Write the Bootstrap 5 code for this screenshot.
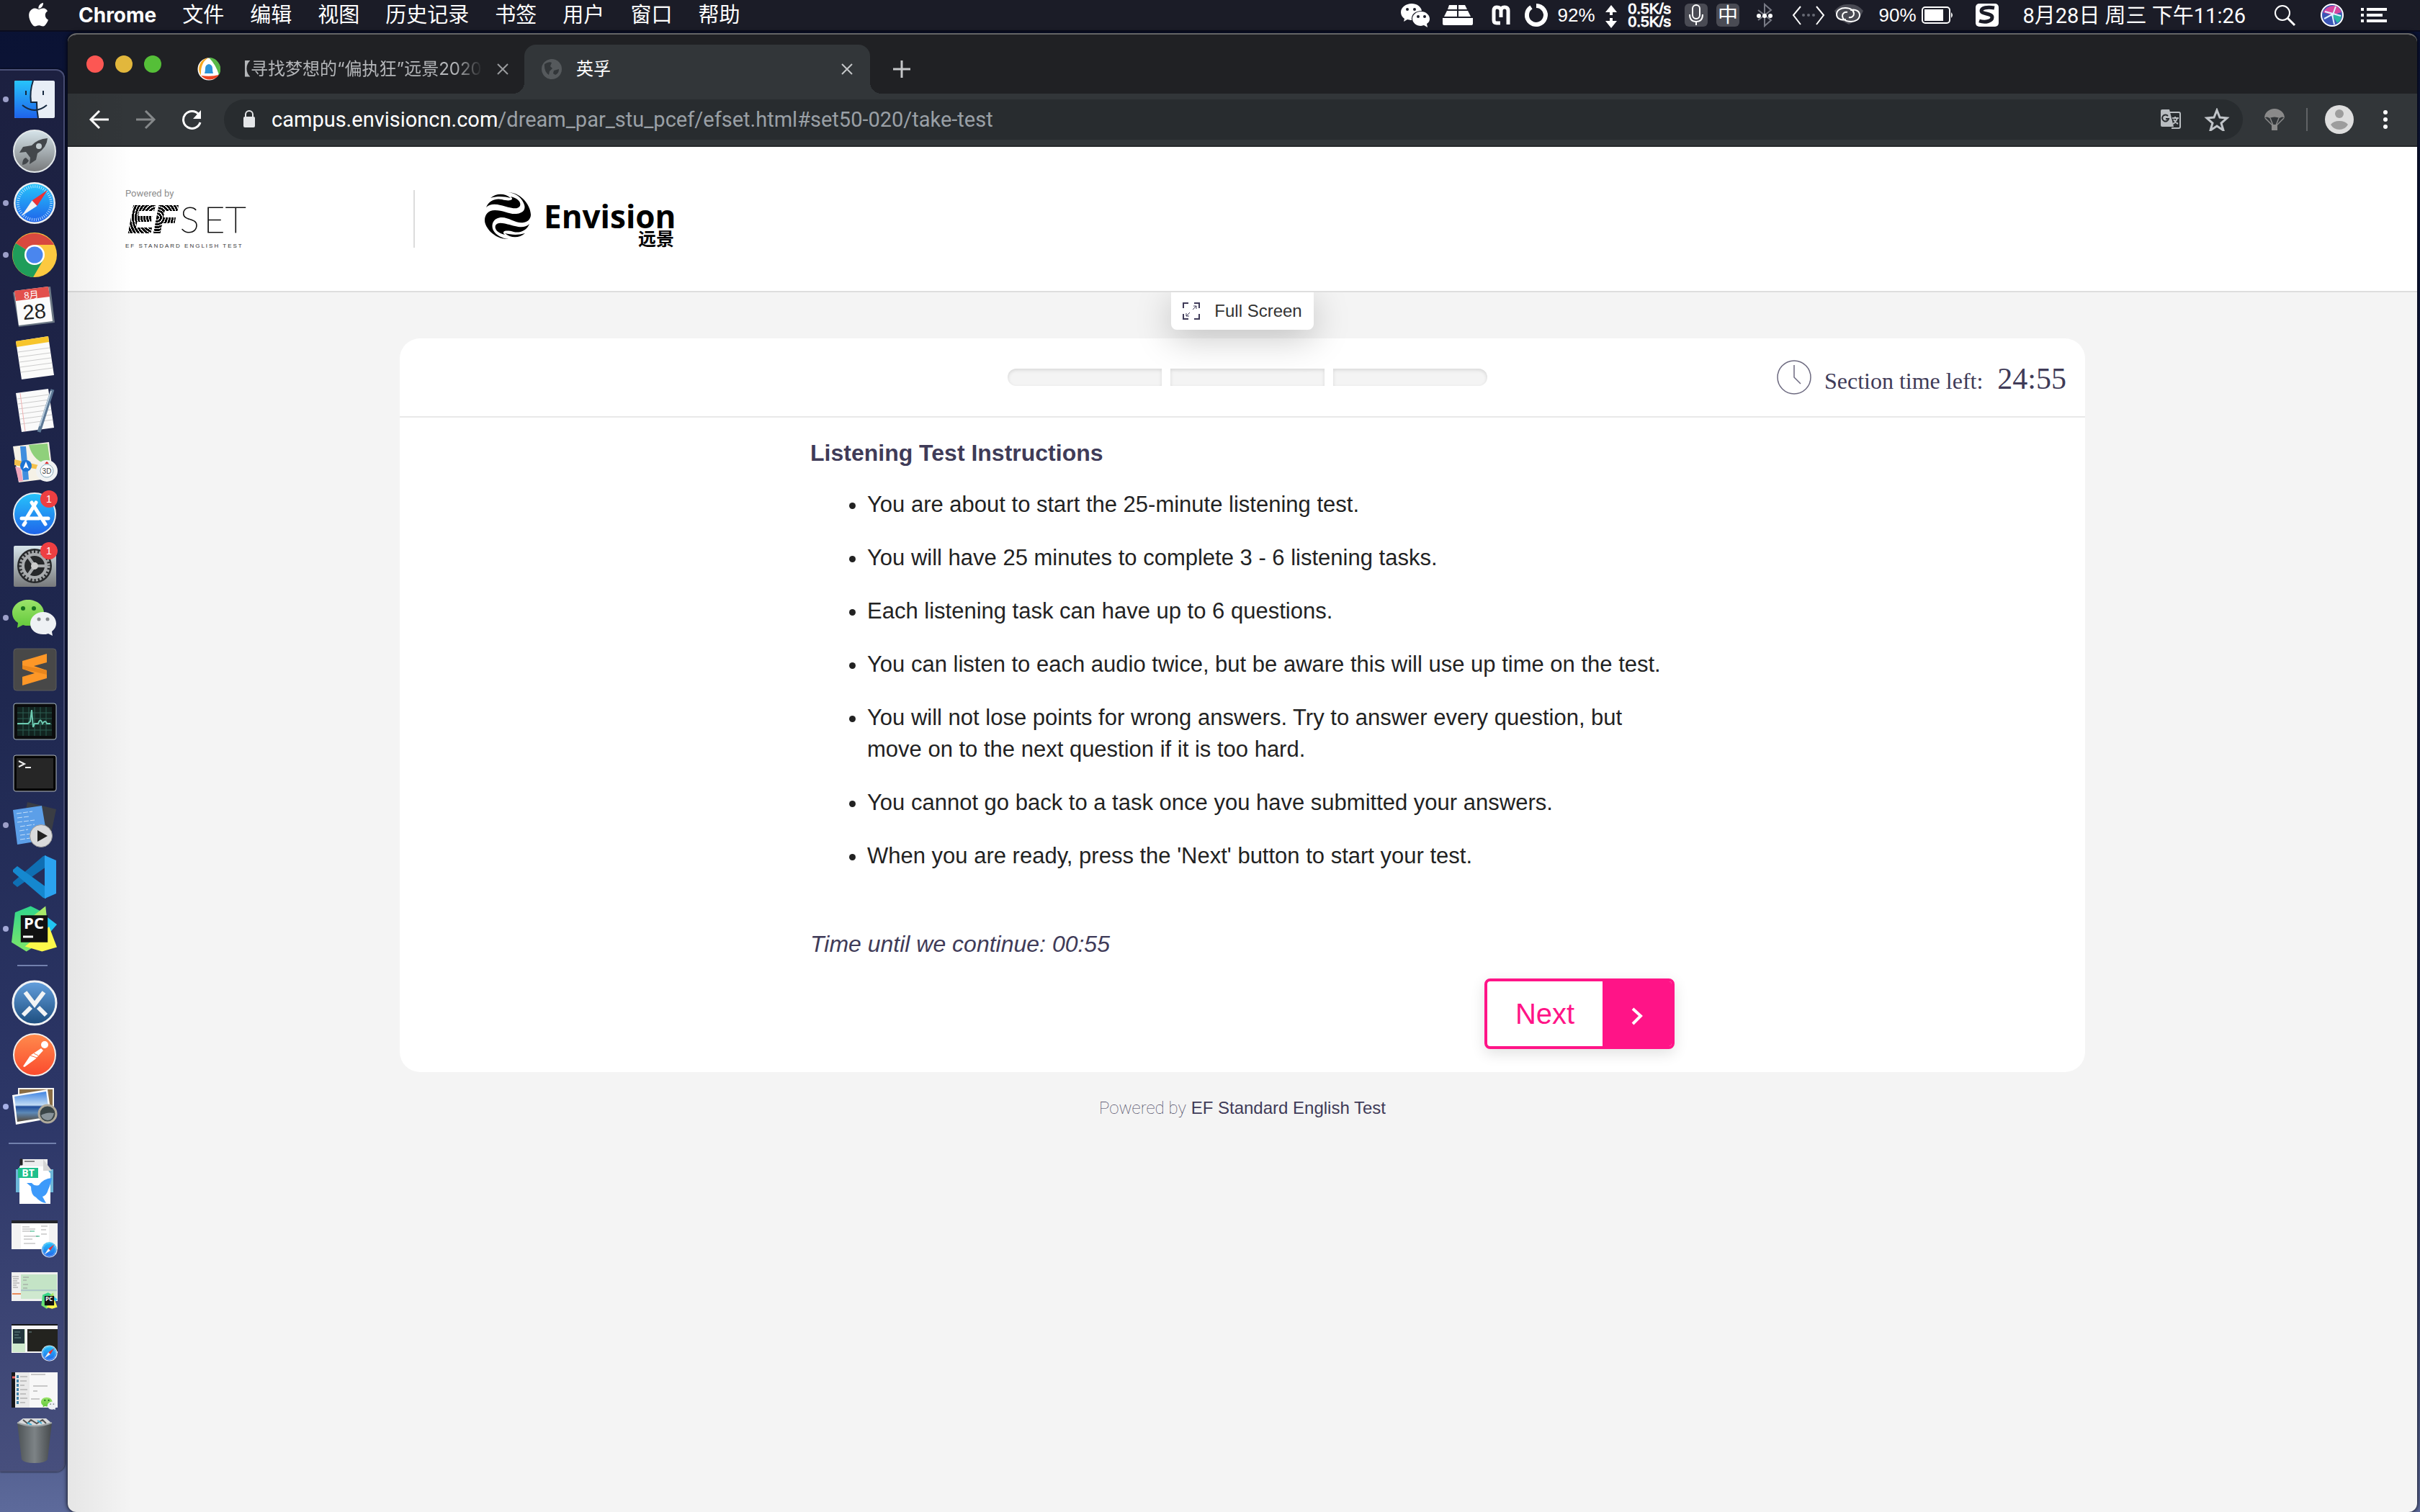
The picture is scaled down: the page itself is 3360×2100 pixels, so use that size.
<!DOCTYPE html>
<html lang="zh-CN">
<head>
<meta charset="utf-8">
<meta name="viewport" content="width=device-width, initial-scale=1">
<title>英孚</title>
<link href="https://cdn.jsdelivr.net/npm/bootstrap@5.3.0/dist/css/bootstrap.min.css" rel="stylesheet">
<style>
  :root { --ink: #3f3b58; --pink: #ff1487; }
  body { min-height: 100vh; font-family: "Liberation Sans", "Noto Sans CJK SC", sans-serif; color: #222; background: linear-gradient(#0a1233 0, #18214c 55%, #2a3563 80%, #5d6a9b 100%); }
  svg { display: block; flex: none; }
  button { border: 0; background: none; padding: 0; }

  /* menu bar */
  .menubar { height: 44px; background: #1b1c27; color: #fff; padding: 0 38px 0 40px; font: 29px/42px Roboto, "Noto Sans CJK SC", sans-serif; border-bottom: 2px solid #0b0d1e; white-space: nowrap; }
  .menubar a { color: inherit; text-decoration: none; }
  .menus { gap: 36px; }
  .menus .app { font: 700 28px/42px Inter, sans-serif; margin-left: 4px; }
  .pct { width: 60px; text-align: center; font: 26px/44px "Liberation Sans", sans-serif; }
  .speed { width: 78px; padding-left: 6px; font: 21px/18px "Liberation Sans", sans-serif; -webkit-text-stroke: 1px #fff; }
  .clock-text { padding: 2px 28px 0 20px; }

  /* dock */
  .dock { width: 90px; margin: 52px 4px 54px 0; padding: 4px 0 6px; background: linear-gradient(#1c2040, #1f2850 45%, #2d3768 75%, #474f7d); border: solid #4a5077; border-width: 2px 2px 2px 0; border-radius: 0 12px 12px 0; box-shadow: 0 0 3px #000; }
  .dock hr { width: 42px; margin: 14px 0 15px 24px; border-top: 2px solid #7280ad; opacity: 1; }
  .dock hr.wide { width: 66px; margin-left: 12px; }

  /* browser window */
  .browser { margin: 2px 4px 0 0; border-radius: 12px; overflow: hidden; background: #f4f4f4; border-top: 2px solid #646566; box-shadow: 0 0 6px #000; }
  .browser::after { content: ""; position: absolute; inset: 82px auto 0 0; width: 90px; background: linear-gradient(90deg, rgba(0,0,0,.06), rgba(0,0,0,0)); pointer-events: none; }
  .tabstrip { height: 82px; background: #202124; padding: 14px 0 0 26px; }
  .lights { gap: 16px; height: 54px; }
  .lights i { width: 24px; height: 24px; border-radius: 50%; }
  .btab { font: 24px/68px Inter, "Noto Sans CJK SC", sans-serif; color: #b4b6b9; height: 68px; white-space: nowrap; }
  .btab.first { width: 458px; margin-left: 46px; padding: 0 22px 0 4px; }
  .btab.first .cap { width: 350px; margin-left: 18px; overflow: hidden; -webkit-mask-image: linear-gradient(90deg, #000 88%, transparent 99%); }
  .btab.cur { width: 480px; margin-left: 0; padding: 0 24px; background: #323639; color: #fff; border-radius: 16px 16px 0 0; position: relative; }
  .btab.cur .cap { margin-left: 20px; }
  .btab.cur::before, .btab.cur::after { content: ""; position: absolute; bottom: 0; width: 16px; height: 16px; }
  .btab.cur::before { left: -16px; background: radial-gradient(circle at 0 0, transparent 16px, #323639 16px); }
  .btab.cur::after { right: -16px; background: radial-gradient(circle at 100% 0, transparent 16px, #323639 16px); }
  .toolbar { height: 74px; background: #323639; border-bottom: 2px solid #25282a; padding: 0 24px 0 28px; }
  .nav-keys { gap: 32px; }
  .omni { height: 56px; border-radius: 28px; background: #282c2f; margin: 0 28px 0 29px; padding: 0 12px 0 22px; font: 29px/56px Roboto, sans-serif; color: #9aa0a6; }
  .omni b { font-weight: 400; color: #fff; }
  .sep { width: 2px; height: 32px; margin: 0 24px 0 28px; background: #606366; }

  /* page */
  .site-head { height: 202px; background: #fff; border-bottom: 2px solid #dedede; padding: 0 80px; }
  .site-head .rule { width: 2px; height: 80px; background: #dcdcdc; }
  .full { height: 52px; padding: 0 16px; gap: 20px; background: #fff; border-radius: 0 0 8px 8px; font-size: 24px; color: #333; box-shadow: 0 12px 50px rgba(0,0,0,.22); clip-path: inset(0 -80px -80px -80px); z-index: 1; }
  .panel { max-width: 2340px; width: 72%; margin-top: 12px; background: #fff; border-radius: 28px; }
  .panel-top { display: grid; grid-template-columns: 1fr auto 1fr; height: 110px; padding: 0 26px 0 40px; border-bottom: 2px solid #e9e9e9; font-family: "Liberation Serif", serif; color: var(--ink); }
  .segs { gap: 12px; }
  .segs i { width: 214px; height: 24px; background: #f4f4f4; box-shadow: inset 0 2px 5px rgba(0,0,0,.12); }
  .segs i:first-child { border-radius: 12px 0 0 12px; }
  .segs i:last-child { border-radius: 0 12px 12px 0; }
  .left-label { font-size: 32px; margin-left: 18px; }
  .left-time { font-size: 42px; margin-left: 20px; }
  .sheet { max-width: 1200px; padding: 27px 0 32px; line-height: 44px; }
  .sheet h1 { font-size: 32px; line-height: 44px; font-weight: 700; color: var(--ink); margin: 0 0 28px; }
  .sheet ul { font-size: 31px; margin: 0; padding-left: 79px; }
  .sheet li + li { margin-top: 30px; }
  .sheet .wait { font-size: 32px; color: var(--ink); margin: 78px 0 26px; }
  .next { width: 264px; height: 98px; border: 4px solid var(--pink); border-radius: 8px; overflow: hidden; background: #fff; color: var(--pink); font-size: 40px; box-shadow: 0 6px 20px rgba(0,0,0,.12); }
  .next .arrow { width: 96px; background: var(--pink); }
  .foot { margin-top: 32px; font-size: 24px; line-height: 36px; color: var(--ink); }
  .foot span { font-family: Roboto, sans-serif; font-weight: 100; }
  .foot a { color: var(--ink); text-decoration: none; }
</style>
<script src="https://cdn.jsdelivr.net/npm/bootstrap@5.3.0/dist/js/bootstrap.bundle.min.js"></script>
</head>
<body class="d-flex flex-column m-0">

<svg width="0" height="0" class="position-absolute" aria-hidden="true">
  <defs>
    <linearGradient id="gSilver" x2="0" y2="1"><stop stop-color="#d6e4ea"/><stop offset="1" stop-color="#77797b"/></linearGradient>
    <linearGradient id="gBlue" x2="0" y2="1"><stop stop-color="#27c4fb"/><stop offset="1" stop-color="#1f63ea"/></linearGradient>
    <linearGradient id="gX" x2="0" y2="1"><stop stop-color="#64a0de"/><stop offset="1" stop-color="#1c4d7e"/></linearGradient>
    <linearGradient id="gOr" x2="0" y2="1"><stop stop-color="#ff8b4d"/><stop offset="1" stop-color="#fb4a2d"/></linearGradient>
    <linearGradient id="gGreen" x2="0" y2="1"><stop stop-color="#9be36a"/><stop offset="1" stop-color="#62c93a"/></linearGradient>
    <linearGradient id="gPc" x2="0" y2="1"><stop stop-color="#2fd58c"/><stop offset="1" stop-color="#7ee76a"/></linearGradient>
    <linearGradient id="gBin" x2="1" y2="0"><stop stop-color="#4d5356"/><stop offset=".5" stop-color="#7d8386"/><stop offset="1" stop-color="#45494c"/></linearGradient>
    <linearGradient id="gSea" x2="0" y2="1"><stop stop-color="#3f83e0"/><stop offset=".45" stop-color="#c2dcf5"/><stop offset=".5" stop-color="#1f4c9a"/><stop offset=".7" stop-color="#5c88b6"/><stop offset="1" stop-color="#54483a"/></linearGradient>
    <radialGradient id="gStripe" gradientUnits="userSpaceOnUse" cx="44" cy="44" r="4" spreadMethod="repeat"><stop offset="0" stop-color="#000"/><stop offset=".68" stop-color="#000"/><stop offset=".74" stop-color="#fff"/><stop offset="1" stop-color="#fff"/></radialGradient>
    <symbol id="safari" viewBox="0 0 60 60"><circle cx="30" cy="30" r="29" fill="#eceef0"/><circle cx="30" cy="30" r="26.500" fill="url(#gBlue)"/><circle cx="30" cy="30" r="23" fill="none" stroke="#d7f0ff" stroke-width="4" stroke-dasharray="1 2" opacity=".8"/><path d="M48 12 33.500 34 26.500 26.500z" fill="#ec3034"/><path d="M12 48 26.500 26.500 33.500 34z" fill="#f0f1f3"/></symbol>
    <symbol id="wechat" viewBox="0 0 62 52"><path d="M22 1C10 1 0 9 0 19c0 6 3 11 8 14l-1 7 8-4c2 1 5 1 7 1 12 0 22-8 22-18S34 1 22 1z" fill="url(#gGreen)"/><circle cx="15" cy="13" r="3" fill="#17701f"/><circle cx="30" cy="13" r="3" fill="#17701f"/><path d="M43 18c-10 0-18 7-18 16s8 15 18 15c2 0 5 0 7-1l6 3-1-6c4-3 6-7 6-11 0-9-8-16-18-16z" fill="#eef1f4"/><circle cx="37" cy="28" r="2.500" fill="#858a8e"/><circle cx="49" cy="28" r="2.500" fill="#858a8e"/></symbol>
    <symbol id="pycharm" viewBox="0 0 66 66"><path d="M6 10 28 1 50 12 46 50 22 65 1 52z" fill="url(#gPc)"/><path d="M30 16 49 1 53 40z" fill="#a8e969"/><path d="M48 14 65 27 52 42z" fill="#21c5f2"/><path d="M20 58 54 30 65 59 44 65z" fill="#fcf84a"/><path d="M14 14h38v38H14z" fill="#111"/></symbol>
  </defs>
</svg>

<header class="menubar d-flex align-items-center justify-content-between">
  <nav class="menus d-flex align-items-center" aria-label="菜单栏">
    <a href="#" aria-label="Apple"><svg width="29" height="34" viewBox="0 0 29 34"><path fill="#fff" d="M20 0c.3 2-.6 4-1.800 5.500-1.200 1.500-3 2.500-4.800 2.400-.3-2 .7-4 1.800-5.300C16.500 1.200 18.500.1 20 0zM26 11.500c-2 1.300-3.300 3.200-3.200 5.700 0 3 1.800 5.100 4.200 6.200-.5 1.700-1.300 3.300-2.300 4.800-1.400 2.100-2.800 4.200-5.100 4.300-2.200 0-2.900-1.300-5.400-1.300s-3.300 1.200-5.300 1.300c-2.200.1-3.900-2.300-5.300-4.300C.8 23.900-1.500 16.500 1.700 11.600c1.500-2.400 4-3.900 6.700-4 2.200 0 4.200 1.500 5.500 1.500s3.800-1.800 6.300-1.500c1.100 0 4 .4 5.800 3.900z"/></svg></a>
    <a href="#" class="app">Chrome</a><a href="#">文件</a><a href="#">编辑</a><a href="#">视图</a><a href="#">历史记录</a><a href="#">书签</a><a href="#">用户</a><a href="#">窗口</a><a href="#">帮助</a>
  </nav>
  <div class="d-flex align-items-center">
    <svg width="60" height="44" viewBox="0 0 60 44"><path fill="#fff" d="M25 6C17 6 10 11 10 18c0 4 2 7 5 9l-1 4 5-3 5 1h1c-1-8 5-13 14-13C38 10 32 6 25 6z"/><path fill="#fff" d="M38 17c-7 0-12 5-12 10s5 10 12 10l4-1 5 3-1-5c3-2 4-4 4-7 0-5-5-10-12-10z"/><g fill="#1b1c27"><circle cx="19" cy="14" r="2"/><circle cx="29" cy="14" r="2"/><circle cx="34" cy="24" r="2"/><circle cx="43" cy="24" r="2"/></g></svg>
    <svg width="58" height="44" viewBox="0 0 58 44"><path fill="#fff" d="M17 8h11v6H15zM30 8h9l3 6H30zM14 16h14v8H10zM30 16h13l4 8H30zM8 26h42v8q0 2-2 2H10q-2 0-2-2z"/></svg>
    <svg width="54" height="44" viewBox="0 0 54 44"><path fill="none" stroke="#fff" stroke-width="5" d="M30 33h-5q-4 0-4-4V16q0-5 4-5 6 0 6 5v9M31 16q0-5 5-5t5 5v19"/></svg>
    <svg width="52" height="44" viewBox="0 0 52 44"><path fill="none" stroke="#fff" stroke-width="6" d="M26 9a13 13 0 1 1-7 2"/></svg>
    <span class="pct">92%</span>
    <svg width="36" height="44" viewBox="0 0 36 44"><path fill="#fff" d="M18 8l8 10h-6v4h-4v-4h-6zM18 40l8-10h-6v-4h-4v4h-6z"/></svg>
    <span class="speed">0.5K/s<br>0.5K/s</span>
    <svg width="44" height="44" viewBox="0 0 44 44"><rect x="6" y="6" width="32" height="32" rx="6" fill="#4a4b54"/><rect x="17" y="8" width="10" height="19" rx="5" fill="none" stroke="#fff" stroke-width="2"/><path d="M13 21q0 10 9 10t9-10M22 31v5" fill="none" stroke="#fff" stroke-width="2"/></svg>
    <svg width="44" height="44" viewBox="0 0 44 44"><rect x="6" y="6" width="32" height="32" rx="6" fill="#4a4b54"/><text x="22" y="32" text-anchor="middle" font-size="28" font-family="Noto Sans CJK SC" fill="#fff">中</text></svg>
    <svg width="58" height="44" viewBox="0 0 58 44"><path d="M20 15l18 14-9 8V7l9 8-18 14" fill="none" stroke="#777984" stroke-width="2"/><g fill="#fff"><circle cx="21" cy="23" r="3"/><circle cx="29" cy="23" r="3"/><circle cx="37" cy="23" r="3"/></g></svg>
    <svg width="64" height="44" viewBox="0 0 64 44"><path d="M21 10 11 22l10 13M43 10l10 12-10 13" fill="none" stroke="#fff" stroke-width="2"/><g fill="#666873"><circle cx="25" cy="22" r="2"/><circle cx="32" cy="22" r="2"/><circle cx="39" cy="22" r="2"/></g></svg>
    <svg width="62" height="44" viewBox="4 0 62 44"><path d="M8 16q8-10 20-9 12-1 20 9-4 12-20 19Q12 28 8 16z" fill="#4a4b54"/><path d="M24 28c-8 2-13-2-13-7 0-6 6-9 12-9 8 0 12 4 12 8s-4 6-7 5M30 15c8-2 13 2 13 7 0 6-6 9-12 9-8 0-12-4-12-8s4-6 7-5" fill="none" stroke="#fff" stroke-width="2"/></svg>
    <span class="pct">90%</span>
    <svg width="62" height="44" viewBox="0 0 62 44"><rect x="4" y="11" width="38" height="22" rx="4" fill="none" stroke="#fff" stroke-width="2"/><rect x="7" y="14" width="26" height="16" fill="#fff"/><path d="M44 18q4 4 0 8z" fill="#fff"/></svg>
    <svg width="62" height="44" viewBox="0 0 62 44"><rect x="16" y="6" width="32" height="32" rx="5" fill="#fff"/><path d="M42 12c-10-2-18 0-18 4 0 5 15 3 15 9 0 5-9 8-18 5" fill="none" stroke="#1b1c27" stroke-width="5"/></svg>
    <span class="clock-text">8月28日 周三 下午11:26</span>
    <svg width="52" height="44" viewBox="0 0 52 44"><circle cx="23" cy="19" r="10" fill="none" stroke="#fff" stroke-width="2"/><path d="M30 26l10 10" stroke="#fff" stroke-width="3"/></svg>
    <svg width="80" height="44" viewBox="0 0 80 44"><circle cx="40" cy="22" r="15" fill="#3b55b5" stroke="#fff" stroke-width="2"/><path d="M27 18q6-10 18-9 5 2 8 9l-13 4z" fill="#d6479f"/><path d="M40 22l13 0q0 8-6 11z" fill="#29b8a4"/><path d="M29 27l11-6 3 14M30 17l22 6M45 10l-5 14" stroke="#dff4ff" stroke-width="2" fill="none"/></svg>
    <svg width="44" height="44" viewBox="0 0 44 44"><path d="M0 14h4M8 14h28M0 22h4M8 22h22M0 30h4M8 30h28" stroke="#fff" stroke-width="4"/></svg>
  </div>
</header>

<div class="d-flex flex-grow-1 align-items-stretch">
  <nav class="dock d-flex flex-column flex-shrink-0 align-self-start" aria-label="Dock">
    <svg width="88" height="72" viewBox="0 0 88 72"><circle cx="8" cy="36" r="4" fill="#9c9fc8"/><rect x="20" y="10" width="56" height="52" rx="2" fill="#e8eef6"/><path d="M22 10h24q-5 15-3 30h8q0 12 2 22H22q-2 0-2-2V12q0-2 2-2z" fill="url(#gBlue)"/><path d="M36 24v6M60 24v6M31 44q17 14 34 0M46 10q-5 15-3 30h8q0 12 2 22" fill="none" stroke="#15283f" stroke-width="2"/></svg>
    <svg width="88" height="72" viewBox="0 0 88 72"><circle cx="48" cy="36" r="29" fill="url(#gSilver)" stroke="#e3e8ea" stroke-width="2"/><path d="M66 18q-14 1-22 10l-12 2-5 8 9-1 6 8-1 9 9-6 2-9q13-8 14-21zM36 45q-5 1-5 10 7-1 9-6z" fill="#43474b"/><circle cx="54" cy="29" r="4" fill="#c3cdd1"/></svg>
    <svg width="88" height="72" viewBox="0 0 88 72"><circle cx="8" cy="36" r="4" fill="#9c9fc8"/><use href="#safari" x="18" y="6" width="60" height="60"/></svg>
    <svg width="88" height="72" viewBox="0 0 88 72"><circle cx="8" cy="36" r="4" fill="#9c9fc8"/><circle cx="48" cy="36" r="31" fill="#fcc940"/><path d="M48 36 22 20A31 31 0 0 1 75 22H48z" fill="#d8493f"/><path d="M22 20a31 31 0 0 0 24 47l14-24-12-7z" fill="#1f9d5a"/><circle cx="48" cy="36" r="14" fill="#fff"/><circle cx="48" cy="36" r="11.500" fill="#4a86ee"/></svg>
    <svg width="88" height="72" viewBox="0 0 88 72"><path d="M18 16 70 8 76 58 26 64z" fill="#6b7784"/><path d="M20 14 67 8 73 56 26 62z" fill="#fbfbfb"/><path d="M20 14 67 8 69 22 22 28z" fill="#e2504c"/><g font-family="Liberation Sans, Noto Sans CJK SC" text-anchor="middle" transform="rotate(-5 46 36)"><text x="45" y="24" font-size="13" fill="#fff">8月</text><text x="47" y="53" font-size="29" fill="#222">28</text></g></svg>
    <svg width="88" height="72" viewBox="0 0 88 72"><path d="M22 12 67 5 75 59 30 65z" fill="#fbfbfa"/><path d="M22 12 67 5 68 13 23 20z" fill="#f7c52c"/><path d="M25 27l44-6M26 34l44-6M27 41l44-6M28 48l44-6M29 55l44-6" stroke="#ccc" stroke-width="1"/></svg>
    <svg width="88" height="72" viewBox="0 0 88 72"><path d="M22 12 67 6 75 60 30 66z" fill="#fafafa"/><path d="M24 20l44-6M25 27l44-6M26 34l44-6M27 41l44-6M28 48l44-6M29 55l44-6" stroke="#ccc"/><path d="M28 12l7 53" stroke="#f2b2b2"/><path d="M73 7 56 60l-2 6" stroke="#5d7996" stroke-width="5" fill="none"/><path d="M71 9 55 58" stroke="#b9cddd" stroke-width="2"/></svg>
    <svg width="88" height="72" viewBox="0 0 88 72"><path d="M18 14 68 8 74 58 26 64z" fill="#f5f1e6"/><path d="M40 12 66 10 70 40Q46 36 40 12z" fill="#8fd07b"/><path d="M20 32l50 12v5L20 40z" fill="#f5c14b"/><path d="M28 14l8 0 4 46-8 1z" fill="#3f8ede"/><path d="M21 42l8 2 3 18-6 1z" fill="#f0a6bb"/><circle cx="36" cy="41" r="8" fill="#1b74d4"/><path d="M36 35l4 10-4-2-4 2z" fill="#fff"/><circle cx="65" cy="48" r="15" fill="#f0f2f3"/><circle cx="65" cy="48" r="9" fill="#fff" stroke="#8ab"/><text x="65" y="52" text-anchor="middle" font-size="10" font-family="Liberation Sans" fill="#444">3D</text><path d="M65 35l3 3h-6z" fill="#d22"/></svg>
    <svg width="88" height="72" viewBox="0 0 88 72"><circle cx="48" cy="36" r="29" fill="url(#gBlue)" stroke="#e6edf2" stroke-width="2"/><path d="M50 20 36 43M44 20l19 30M30 42h24M60 42h7M35 48l-2 3" stroke="#fff" stroke-width="5" stroke-linecap="round"/><circle cx="68" cy="15" r="12" fill="#ee3f42"/><text x="68" y="20" text-anchor="middle" font-size="14" font-family="Liberation Sans" fill="#fff">1</text></svg>
    <svg width="88" height="72" viewBox="0 0 88 72"><rect x="19" y="8" width="59" height="57" rx="2" fill="url(#gSilver)"/><circle cx="48" cy="36" r="24" fill="#26282a"/><circle cx="48" cy="36" r="19" fill="none" stroke="#9da0a2" stroke-width="5" stroke-dasharray="3 2"/><circle cx="48" cy="36" r="16" fill="none" stroke="#a8abad" stroke-width="4"/><path d="M48 36h16M48 36l-9 13M48 36l-9-13" stroke="#a8abad" stroke-width="4"/><circle cx="48" cy="36" r="5" fill="#ccc"/><circle cx="68" cy="15" r="12" fill="#ee3f42"/><text x="68" y="20" text-anchor="middle" font-size="14" font-family="Liberation Sans" fill="#fff">1</text></svg>
    <svg width="88" height="72" viewBox="0 0 88 72"><circle cx="8" cy="36" r="4" fill="#9c9fc8"/><use href="#wechat" x="17" y="10" width="62" height="52"/></svg>
    <svg width="88" height="72" viewBox="0 0 88 72"><rect x="19" y="7" width="59" height="58" rx="4" fill="#484848" stroke="#5b5b5b"/><path d="M31 24 65 14v12L47 31l18 6v11L31 58V46l17-5-17-6z" fill="#fd9727"/><path d="M31 35v-5l34 7v6z" fill="#e9861d"/></svg>
    <svg width="88" height="72" viewBox="0 0 88 72"><rect x="19" y="11" width="59" height="50" rx="3" fill="#0b0c0d" stroke="#a9bac2" stroke-width="1"/><rect x="24" y="16" width="48" height="40" fill="#122420"/><path d="M24 24h48M24 32h48M24 40h48M24 48h48M32 16v40M40 16v40M48 16v40M56 16v40M64 16v40" stroke="#2a5c50"/><path d="M24 39h15l3-3 2-16 2 24 2-5h5q3-9 6 0 4-6 6 0h5" fill="none" stroke="#6cc9b0" stroke-width="2"/></svg>
    <svg width="88" height="72" viewBox="0 0 88 72"><rect x="19" y="11" width="59" height="50" rx="3" fill="#060606" stroke="#b3bac0"/><rect x="23" y="15" width="51" height="42" fill="#262626"/><path d="M26 19l8 4-8 4M35 28h8" fill="none" stroke="#eee" stroke-width="2"/></svg>
    <svg width="88" height="72" viewBox="0 0 88 72"><circle cx="8" cy="36" r="4" fill="#9c9fc8"/><path d="M38 4 78 14 70 52 30 44z" fill="#3a3d44"/><path d="M18 15 58 9 66 56 24 63z" fill="#5c9fe8"/><path d="M23 20l22-3M24 26l16-2M24 32l24-3M28 38l20-3M27 44l12-2M28 50l22-3M28 56l14-2" stroke="#c4def8" stroke-dasharray="7 2"/><circle cx="57" cy="51" r="15.500" fill="#d9dadb" stroke="#999"/><path d="M52 43l14 8-14 8z" fill="#222"/></svg>
    <svg width="88" height="72" viewBox="0 0 88 72"><path d="M18 45 24 50 64 22V6L60 7 18 43z" fill="#0f6fb3"/><path d="M18 26 24 21 64 50V66L60 65 18 29z" fill="#1588cf"/><path d="M62 6 78 13V59L62 66z" fill="#2ba3f0"/></svg>
    <svg width="88" height="72" viewBox="0 0 88 72"><circle cx="8" cy="36" r="4" fill="#a3a8d6"/><use href="#pycharm" x="15" y="3" width="65" height="66"/><text x="47" y="36" text-anchor="middle" font-size="22" font-weight="700" font-family="Open Sans" fill="#fff">PC</text><path d="M32 47h14" stroke="#fff" stroke-width="3"/></svg>
    <hr>
    <svg width="88" height="72" viewBox="0 0 88 72"><circle cx="48" cy="36" r="30" fill="url(#gX)" stroke="#f0f2f4" stroke-width="3"/><path d="M35 21 48 38 61 21M32 53l11-11M64 53 53 42" fill="none" stroke="#f2f4f5" stroke-width="6"/></svg>
    <svg width="88" height="72" viewBox="0 0 88 72"><circle cx="48" cy="36" r="29" fill="url(#gOr)" stroke="#f4eeea" stroke-width="2"/><circle cx="62" cy="22" r="5" fill="#fff"/><path d="M57 27 42 37l-10 15 2 1 15-11 11-12z" fill="#fff"/><path d="M42 37l9 3M47 34l6 3" stroke="#fb6a3d"/></svg>
    <svg width="88" height="72" viewBox="0 0 88 72"><circle cx="8" cy="36" r="4" fill="#a6b0e6"/><path d="M25 10h50v38H25z" fill="#f4f2ee"/><path d="M27 12h46v30H27z" fill="#8a6d45"/><path d="M17 20 66 12 72 52 22 61z" fill="#fbfbfb"/><path d="M20 22 64 15 69 50 24 57z" fill="url(#gSea)"/><circle cx="66" cy="46" r="12" fill="#3a4548" stroke="#b0aa9c" stroke-width="3"/><path d="M57 48q8-5 18-3-2 10-9 10-7-1-9-7z" fill="#88939a"/></svg>
    <hr class="wide">
    <svg width="88" height="72" viewBox="0 0 88 72"><path d="M22 20h52v32H22z" fill="#6cb6d8"/><path d="M28 6h38v12H28z" fill="#eee"/><path d="M28 6h3v8h-3zM34 9h14" fill="#222" stroke="#222"/><path d="M27 16h36l7 10v42H27z" fill="#fff"/><path d="M60 6v16h12z" fill="#d5d5d5"/><rect x="25" y="18" width="28" height="14" fill="#20c08c"/><text x="39" y="30" text-anchor="middle" font-size="14" font-weight="700" font-family="Open Sans" fill="#fff">BT</text><path d="M37 39l7 0q4 5 10 3 6-9 18-10-2 10-5 16-2 8-8 10l5 9q-8-1-14-8-7-3-7-15z" fill="#3d9afa"/></svg>
    <svg width="88" height="72" viewBox="0 0 88 72"><path d="M16 19h64v40H16z" fill="#f3f3f3"/><path d="M16 19h64v4H16z" fill="#23252a"/><path d="M29 25h39v33H29z" fill="#fff"/><path d="M31 28h10M31 31h18M31 34h12M33 41h20M33 45h12M33 51h16M57 27h9M57 32h7M57 38h8" stroke="#aaa"/><path d="M42 34h6M50 41h5" stroke="#25b17c"/><use href="#safari" x="57" y="48" width="23" height="23"/></svg>
    <svg width="88" height="72" viewBox="0 0 88 72"><path d="M16 19h64v40H16z" fill="#f0f0f0"/><path d="M29 22h50v34H29z" fill="#cfe8cf"/><path d="M29 22h50v24H29z" fill="#c4e4c6"/><path d="M17 25h9M18 28h8M18 31h6M18 34h9M18 37h5M18 40h7M32 26h8M32 30h5M32 36h7M32 41h6" stroke="#999"/><path d="M17 49h12" stroke="#e88a5a" stroke-width="2"/><path d="M29 44h50" stroke="#9ac"/><use href="#pycharm" x="57" y="47" width="23" height="23"/><text x="68" y="59" text-anchor="middle" font-size="8" font-weight="700" font-family="Open Sans" fill="#fff">PC</text></svg>
    <svg width="88" height="72" viewBox="0 0 88 72"><path d="M16 19h64v40H16z" fill="#f6f6f6"/><path d="M16 19h64v2H16z" fill="#16171a"/><path d="M17 26h18v32H17z" fill="#cfeacd"/><path d="M18 26h16v20H18z" fill="#23363d"/><path d="M38 26h42v31H38z" fill="#23231f"/><path d="M20 30h8M20 34h6M20 38h9M40 30h4" stroke="#6a8a8a"/><use href="#safari" x="57" y="48" width="23" height="23"/></svg>
    <svg width="88" height="72" viewBox="0 0 88 72"><path d="M16 14h64v49H16z" fill="#f7f7f7"/><path d="M16 14h5v49h-5z" fill="#161618"/><path d="M21 14h20v49H21z" fill="#e9e9e9"/><path d="M17 21h4" stroke="#e66" stroke-width="3"/><path d="M23 20h3M23 26h3M23 32h3M23 38h3M23 44h3M23 50h3M23 56h3" stroke="#3d7fa8" stroke-width="4"/><path d="M28 20h10M28 26h9M28 32h6M28 38h10M28 44h8M28 50h10M28 56h7M43 17h20M46 33h20M46 40h6M43 51h12" stroke="#999"/><use href="#wechat" x="57" y="48" width="22" height="19"/></svg>
    <svg width="88" height="72" viewBox="0 0 88 72"><path d="M24 12 32 6h32l7 6-7 8H30z" fill="#d8dadc"/><path d="M32 8l6 5 5-5 8 5 8-5 5 5" fill="none" stroke="#555" stroke-width="2"/><path d="M38 12l6 3M52 9l6 4" stroke="#3ab0d8" stroke-width="2"/><path d="M24 12q24 9 48 0l-6 51q-3 5-18 5t-18-5z" fill="url(#gBin)"/><path d="M24 12q24 9 48 0" fill="none" stroke="#9da3a6" stroke-width="2"/></svg>
  </nav>

  <main class="browser flex-grow-1 position-relative">
    <div class="tabstrip d-flex">
      <div class="lights d-flex align-items-center"><i style="background:#fc5753"></i><i style="background:#e2b73c"></i><i style="background:#55bf38"></i></div>
      <div class="btab first d-flex align-items-center">
        <svg width="32" height="32" viewBox="0 0 32 32"><circle cx="16" cy="16" r="15.500" fill="#fff"/><path d="M16 0A16 16 0 0 1 30 24Q26 10 16 0z" fill="#58b947"/><path d="M16 0Q4 6 5 25A16 16 0 0 1 16 0z" fill="#f6a821"/><path d="M5 25q14 2 25-1A16 16 0 0 1 5 25z" fill="#ee4523"/><path d="M10 22q1-2 1-7 0-5 5-6 5 1 5 6 0 5 1 7z" fill="#2b93d8"/></svg>
        <span class="cap">【寻找梦想的“偏执狂”远景2020</span>
        <button class="ms-auto" aria-label="关闭"><svg width="16" height="16" viewBox="0 0 16 16"><path d="M1 1l14 14M15 1 1 15" stroke="#9a9c9f" stroke-width="2"/></svg></button>
      </div>
      <div class="btab cur d-flex align-items-center">
        <svg width="28" height="28" viewBox="0 0 28 28"><circle cx="14" cy="14" r="14" fill="#55595c"/><path d="M4 7q6-4 10-2l-2 5 3 3-4 4-1 5q-7-5-6-15zM17 16l7-2q0 6-5 8l-3-2z" fill="#323639"/></svg>
        <span class="cap">英孚</span>
        <button class="ms-auto" aria-label="关闭"><svg width="16" height="16" viewBox="0 0 16 16"><path d="M1 1l14 14M15 1 1 15" stroke="#c5c7c9" stroke-width="2"/></svg></button>
      </div>
      <button class="px-3 ms-3" aria-label="新标签页"><svg width="24" height="68" viewBox="0 0 24 68"><path d="M12 22v24M0 34h24" stroke="#c5c7c9" stroke-width="3"/></svg></button>
    </div>
    <div class="toolbar d-flex align-items-center">
      <div class="nav-keys d-flex">
        <button aria-label="后退"><svg width="32" height="32" viewBox="0 0 32 32"><path d="M29 16H5M16 4 4 16l12 12" fill="none" stroke="#fff" stroke-width="3"/></svg></button>
        <button aria-label="前进"><svg width="32" height="32" viewBox="0 0 32 32"><path d="M3 16h24M16 4l12 12-12 12" fill="none" stroke="#85888a" stroke-width="3"/></svg></button>
        <button aria-label="重新加载"><svg width="32" height="32" viewBox="0 0 32 32"><path d="M26 9A12 12 0 1 0 28 20" fill="none" stroke="#fff" stroke-width="3"/><path d="M29 3v12H18z" fill="#fff"/></svg></button>
      </div>
      <div class="omni d-flex align-items-center flex-grow-1">
        <svg width="28" height="28" viewBox="0 0 28 28"><rect x="5" y="10" width="16" height="15" rx="2" fill="#e4e6e8"/><path d="M8 11V7a5 5 0 0 1 10 0v4" fill="none" stroke="#e4e6e8" stroke-width="2"/></svg>
        <div class="flex-grow-1 ms-3" role="textbox" aria-label="地址" tabindex="0"><b>campus.envisioncn.com</b>/dream_par_stu_pcef/efset.html#set50-020/take-test</div>
        <svg width="32" height="32" viewBox="0 0 32 32"><path d="M12 6h15q2 0 2 2v18q0 2-2 2H17" fill="none" stroke="#b9bdc1" stroke-width="2"/><path d="M4 2h10l6 24H4q-2 0-2-2V4q0-2 2-2z" fill="#b9bdc1"/><path d="M12 11a4.500 4.500 0 1 0 1 4H9" fill="none" stroke="#282c2f" stroke-width="2"/><path d="M18 14h9M22 12v2M25 14q-2 6-6 8M20 16q2 4 6 6" fill="none" stroke="#b9bdc1" stroke-width="2"/></svg>
        <svg class="ms-4" width="48" height="32" viewBox="0 0 48 32"><path d="M24 3l4 10 10 1-8 7 3 10-9-6-9 6 3-10-8-7 10-1z" fill="none" stroke="#c0c4c8" stroke-width="3"/></svg>
      </div>
      <svg width="32" height="32" viewBox="0 0 32 32"><path d="M2 14a14 13 0 0 1 28 0q-3-3-7 0-7-3-14 0-4-3-7 0z" fill="#8a8a8a"/><path d="M3 14l10 10M10 14l4 10M22 14l-4 10M29 14 19 24" stroke="#8a8a8a" stroke-width="1.500"/><path d="M12 23h8v8h-8z" fill="#8a8a8a"/></svg>
      <span class="sep"></span>
      <svg width="40" height="40" viewBox="0 0 40 40"><circle cx="20" cy="20" r="20" fill="#dedede"/><circle cx="20" cy="12" r="6" fill="#9d9d9d"/><path d="M8 27q4-5 12-5t12 5q-4 7-12 7T8 27z" fill="#9d9d9d"/></svg>
      <svg class="ms-4" width="40" height="32" viewBox="0 0 40 32"><g fill="#fff"><circle cx="20" cy="6" r="3"/><circle cx="20" cy="16" r="3"/><circle cx="20" cy="26" r="3"/></g></svg>
    </div>

    <div class="site-head d-flex align-items-center">
      <svg width="400" height="92" viewBox="0 0 400 92" role="img" aria-label="EF SET"><text x="0" y="15" font-family="Roboto" font-size="13" fill="#8d8d8d">Powered by</text><text x="4" y="65" font-family="Liberation Sans" font-weight="700" font-style="italic" font-size="53" fill="url(#gStripe)" stroke="url(#gStripe)" stroke-width="2">EF</text><g font-family="Lato" font-weight="100" font-size="50" fill="#111" stroke="#111" stroke-width="1"><text x="76" y="65">S</text><text x="109" y="65">E</text><text x="139" y="65">T</text></g><text x="0" y="86" font-family="Liberation Sans" font-size="8" letter-spacing="2" fill="#333">EF STANDARD ENGLISH TEST</text></svg>
      <span class="rule"></span>
      <svg class="ms-5" width="320" height="92" viewBox="-48 0 320 92" role="img" aria-label="Envision 远景"><g transform="translate(1 8)"><path d="M32 1C48 1 63 16 64 32C64 38 60 42 54 43C44 45 34 36 24 36C12 36 8 46 12 54C16 61 24 65 33 66C14 67 0 50 0 40C0 32 5 26 14 26C26 26 34 32 44 31C54 30 58 24 54 16C50 7 42 2 32 1Z"/><g id="swirl"><path d="M2 22C6 12 16 9 24 11C34 14 42 12 36 7C46 9 51 15 49 20C45 27 32 21 22 19C14 17 7 17 2 22Z"/><path d="M8 9C16 2 28 2 36 9C28 7 18 6 8 9Z"/></g><use href="#swirl" transform="rotate(180 32 33.500)"/></g><text x="83" y="59" font-family="Open Sans" font-weight="700" font-size="44">Envision</text><text x="214" y="83" font-family="Noto Sans CJK SC" font-weight="700" font-size="25">远景</text></svg>
    </div>

    <button class="full d-flex align-items-center mx-auto position-relative"><svg width="24" height="24" viewBox="0 0 24 24"><path d="M1 8V1h7M16 1h7v7M23 16v7h-7M8 23H1v-7" fill="none" stroke="#3f3b58" stroke-width="2"/><path d="M14 10l5-5M15 5h4v4M10 14l-5 5M5 15v4h4" fill="none" stroke="#3f3b58"/></svg>Full Screen</button>

    <section class="panel mx-auto">
      <div class="panel-top align-items-center">
        <span></span>
        <div class="segs d-flex"><i></i><i></i><i></i></div>
        <div class="d-flex justify-content-end align-items-center">
          <svg width="48" height="48" viewBox="0 0 48 48"><circle cx="24" cy="24" r="23" fill="none" stroke="#6d6a80" stroke-width="1.500"/><path d="M24 7v17l9 9" fill="none" stroke="#6d6a80" stroke-width="1.500"/></svg>
          <div class="d-flex align-items-baseline pt-1"><span class="left-label">Section time left:</span><span class="left-time">24:55</span></div>
        </div>
      </div>
      <div class="sheet mx-auto">
        <h1>Listening Test Instructions</h1>
        <ul>
          <li>You are about to start the 25-minute listening test.</li>
          <li>You will have 25 minutes to complete 3 - 6 listening tasks.</li>
          <li>Each listening task can have up to 6 questions.</li>
          <li>You can listen to each audio twice, but be aware this will use up time on the test.</li>
          <li>You will not lose points for wrong answers. Try to answer every question, but<br>move on to the next question if it is too hard.</li>
          <li>You cannot go back to a task once you have submitted your answers.</li>
          <li>When you are ready, press the 'Next' button to start your test.</li>
        </ul>
        <p class="wait fst-italic">Time until we continue: 00:55</p>
        <button class="next d-flex ms-auto align-items-stretch"><span class="flex-grow-1 align-self-center">Next</span><span class="arrow d-flex align-items-center justify-content-center"><svg width="20" height="32" viewBox="0 0 20 32"><path d="M4 9l11 10L4 30" fill="none" stroke="#fff" stroke-width="4"/></svg></span></button>
      </div>
    </section>
    <p class="foot text-center mb-0"><span>Powered by</span> <a href="#">EF Standard English Test</a></p>
  </main>
</div>
</body>
</html>
